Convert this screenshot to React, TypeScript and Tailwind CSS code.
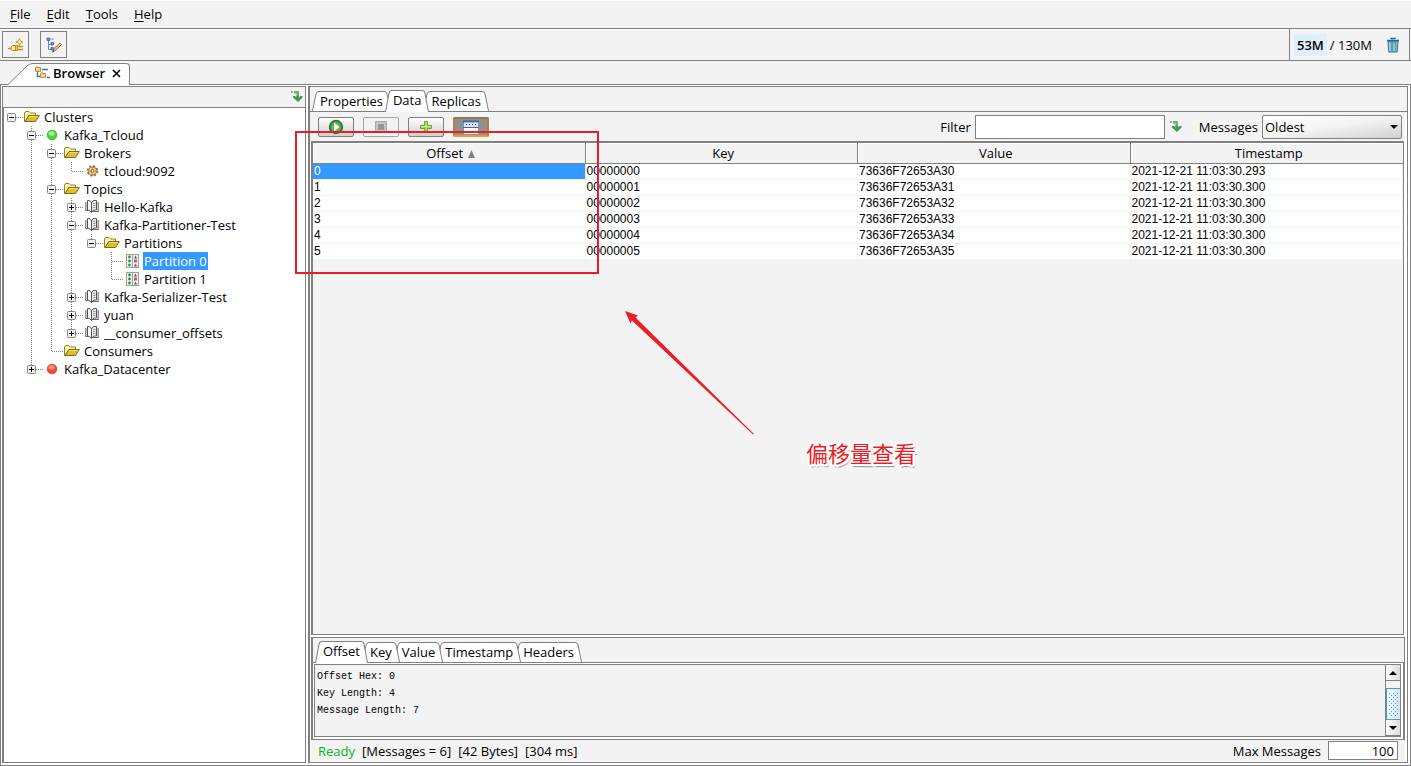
import { useState, type ReactNode } from "react";

type IconName = "folder" | "green" | "red" | "gear" | "book" | "partition";

type TreeRow = {
  label: string;
  icon: IconName;
  // one character per indent level: " " empty, "|" passing line, "T" branch, "L" last branch, "-" root
  guides: string;
  toggle?: "+" | "-";
};

const TREE: TreeRow[] = [
  { label: "Clusters", icon: "folder", guides: "-", toggle: "-" },
  { label: "Kafka_Tcloud", icon: "green", guides: " T", toggle: "-" },
  { label: "Brokers", icon: "folder", guides: " |T", toggle: "-" },
  { label: "tcloud:9092", icon: "gear", guides: " ||L" },
  { label: "Topics", icon: "folder", guides: " |T", toggle: "-" },
  { label: "Hello-Kafka", icon: "book", guides: " ||T", toggle: "+" },
  { label: "Kafka-Partitioner-Test", icon: "book", guides: " ||T", toggle: "-" },
  { label: "Partitions", icon: "folder", guides: " |||L", toggle: "-" },
  { label: "Partition 0", icon: "partition", guides: " ||| T" },
  { label: "Partition 1", icon: "partition", guides: " ||| L" },
  { label: "Kafka-Serializer-Test", icon: "book", guides: " ||T", toggle: "+" },
  { label: "yuan", icon: "book", guides: " ||T", toggle: "+" },
  { label: "__consumer_offsets", icon: "book", guides: " ||L", toggle: "+" },
  { label: "Consumers", icon: "folder", guides: " |L" },
  { label: "Kafka_Datacenter", icon: "red", guides: " L", toggle: "+" },
];

const MESSAGES = [
  ["0", "00000000", "73636F72653A30", "2021-12-21 11:03:30.293"],
  ["1", "00000001", "73636F72653A31", "2021-12-21 11:03:30.300"],
  ["2", "00000002", "73636F72653A32", "2021-12-21 11:03:30.300"],
  ["3", "00000003", "73636F72653A33", "2021-12-21 11:03:30.300"],
  ["4", "00000004", "73636F72653A34", "2021-12-21 11:03:30.300"],
  ["5", "00000005", "73636F72653A35", "2021-12-21 11:03:30.300"],
];

function FolderIcon() {
  return (
    <svg width="16" height="16" viewBox="0 0 16 16">
      <path d="M.5 12V4L1.500 2.500H5L6.500 4H11.500V7H5L1 13Z" fill="#fdf3ae" stroke="#93801f" />
      <path d="M1 12.500 4.800 6.500H15.300L11.500 12.500Z" fill="#dfbb36" stroke="#7f6b10" />
      <path d="M5.300 7.500h8.500" stroke="#f3dc78" />
    </svg>
  );
}

function DotIcon({ light, mid, dark }: { light: string; mid: string; dark: string }) {
  return (
    <svg width="16" height="16" viewBox="0 0 16 16">
      <circle cx="8" cy="8" r="4.800" fill={mid} stroke={dark} strokeWidth=".8" />
      <ellipse cx="7.500" cy="6.500" rx="3" ry="2.300" fill={light} />
    </svg>
  );
}

function GearIcon() {
  return (
    <svg width="16" height="16" viewBox="0 0 16 16">
      <circle cx="8.500" cy="8" r="4.800" fill="#f4c56c" stroke="#8a6240" strokeWidth="1.800" strokeDasharray="2 1.770" />
      <circle cx="8.500" cy="8" r="4" fill="#f9d487" stroke="#ab7642" strokeWidth=".8" />
      <circle cx="8.500" cy="8" r="1.500" fill="#fff" stroke="#7c5a3c" />
      <path d="M8.500 4v2M8.500 10v2M4.500 8h2M10.500 8h2" stroke="#c98e45" />
    </svg>
  );
}

function BookIcon() {
  return (
    <svg width="16" height="16" viewBox="0 0 16 16">
      <path d="M1.500 3V11.500H4M14.500 3V12.500H8" fill="none" stroke="#666" />
      <path d="M1.500 3h2v8h-2ZM13 3h1.500v9H13Z" fill="#c4c4c4" />
      <path d="M3.500 1.500H5Q7 2 7.500 4V13.500Q6.500 11.500 3.500 11Z" fill="#fafafa" stroke="#555" />
      <path d="M7.500 4Q8.500 1.500 10 1.500H12.500V11H10Q8.500 11.500 7.500 13.500Z" fill="#ececec" stroke="#555" />
      <path d="M9 4.500h2.500M9 6.500h2.500M9 8.500h2.500" stroke="#999" />
    </svg>
  );
}

function PartitionIcon() {
  return (
    <svg width="16" height="16" viewBox="0 0 16 16">
      <rect x="2.500" y="1.500" width="12" height="13" fill="#eef5fb" stroke="#aaa183" />
      <path d="M8.500 2v12" stroke="#aaa183" />
      <circle cx="5.500" cy="4" r="1.400" fill="#2c8b57" />
      <circle cx="5.500" cy="8" r="1.400" fill="#2c8b57" />
      <circle cx="5.500" cy="12" r="1.400" fill="#2c8b57" />
      <path d="m9.800 5.500 1.700-3 1.700 3Zm0 8 1.700-3 1.700 3Z" fill="#2a6db8" />
      <path d="M10 6.500h3v3h-3z" fill="#e0543e" />
    </svg>
  );
}

function NodeIcon({ name }: { name: IconName }) {
  switch (name) {
    case "folder":
      return <FolderIcon />;
    case "green":
      return <DotIcon light="#9bf58a" mid="#44d637" dark="#35ad2c" />;
    case "red":
      return <DotIcon light="#ff9a80" mid="#f5452b" dark="#dd3a22" />;
    case "gear":
      return <GearIcon />;
    case "book":
      return <BookIcon />;
    case "partition":
      return <PartitionIcon />;
  }
}

function DropArrowIcon() {
  return (
    <svg width="12" height="12" viewBox="0 0 12 12">
      <path d="M0 0h2v2H0z" fill="#7fc27d" />
      <path d="M3 0h5v7H5.500V2.500H3z" fill="#6ab573" />
      <path d="M2 5H4L5.500 6.500V4.500H8V6.500L9.500 5H11.500V6.500L7 11 2 6.500Z" fill="#3d9a56" />
    </svg>
  );
}

function Guide({ kind, toggle }: { kind: string; toggle?: "+" | "-" }) {
  const branch = kind === "T" || kind === "L" || kind === "-";
  return (
    <svg width="20" height="18" viewBox="0 0 20 18" className="shrink-0">
      {(kind === "|" || kind === "T") && <path d="M7.500 0V18" stroke="#808080" strokeDasharray="1 1" />}
      {kind === "L" && <path d="M7.500 0V10" stroke="#808080" strokeDasharray="1 1" />}
      {branch && <path d="M8 9.500H19" stroke="#808080" strokeDasharray="1 1" />}
      {toggle && (
        <>
          <rect x="3.500" y="5.500" width="8" height="8" rx="1" fill="#f1f1ee" stroke="#848484" />
          <path d={toggle === "+" ? "M5 9.500h5M7.500 7v5" : "M5 9.500h5"} stroke="#000" />
        </>
      )}
    </svg>
  );
}

function Tree() {
  const [selected, setSelected] = useState("Partition 0");
  return (
    <ul role="tree" aria-label="Clusters">
      {TREE.map((row) => (
        <li key={row.label} role="treeitem" aria-selected={row.label === selected} className="flex h-[18px] items-center">
          {row.guides.split("").map((kind, i) => (
            <Guide key={i} kind={kind} toggle={i === row.guides.length - 1 ? row.toggle : undefined} />
          ))}
          <NodeIcon name={row.icon} />
          <button
            type="button"
            onClick={() => setSelected(row.label)}
            className={`ml-[3px] h-[18px] px-px leading-[18px] whitespace-nowrap ${
              row.label === selected ? "bg-[#3399ff] text-white" : ""
            }`}
          >
            {row.label}
          </button>
        </li>
      ))}
    </ul>
  );
}

type TabStripProps = {
  label: string;
  tabs: string[];
  active: string;
  onSelect: (tab: string) => void;
};

function TabStrip({ label, tabs, active, onSelect }: TabStripProps) {
  return (
    <div role="tablist" aria-label={label} className="flex h-6 items-end border-b border-[#808080] pl-0.5">
      {tabs.map((tab, i) => {
        const on = tab === active;
        return (
          <button
            key={tab}
            type="button"
            role="tab"
            aria-selected={on}
            onClick={() => onSelect(tab)}
            className={`relative -mr-1.5 flex ${on ? "-mb-px h-[22px]" : "h-5"}`}
            style={{ zIndex: on ? 20 : 10 - i }}
          >
            <svg width="8" height="100%" viewBox="0 0 8 20" preserveAspectRatio="none" className="shrink-0">
              <path d="M.5 20 4 3Q4.500.5 7 .5H8V20Z" fill="#fff" />
              <path d="M.5 20 4 3Q4.500.5 7 .5H8" fill="none" stroke="#808080" />
            </svg>
            <span className="h-full border-t border-[#808080] bg-white leading-[19px]">{tab}</span>
            <svg width="8" height="100%" viewBox="0 0 8 20" preserveAspectRatio="none" className="shrink-0">
              <path d="M7.500 20 4 3Q3.500.5 1 .5H0V20Z" fill="#fff" />
              <path d="M7.500 20 4 3Q3.500.5 1 .5H0" fill="none" stroke="#808080" />
            </svg>
          </button>
        );
      })}
    </div>
  );
}

function ToolButton({ label, dim, pressed, children }: { label: string; dim?: boolean; pressed?: boolean; children: ReactNode }) {
  const look = pressed
    ? "border-2 border-[#a98245] border-t-[#8d7650] border-b-[#dfa02d] bg-[#909090]"
    : dim
      ? "border border-[#a5a5a5] bg-[#f3f3f3]"
      : "border border-[#808080] bg-linear-to-b from-white to-[#d0d0d0]";
  return (
    <button type="button" aria-label={label} className={`flex h-5 w-9 items-center justify-center rounded-xs ${look}`}>
      {children}
    </button>
  );
}

function MenuBar() {
  return (
    <nav className="flex h-[29px] items-center border-t border-b border-t-white border-b-[#808080] pb-0.5 pl-0.5">
      {["File", "Edit", "Tools", "Help"].map((item) => (
        <button key={item} type="button" className="px-2">
          <span className="underline underline-offset-2">{item[0]}</span>
          {item.slice(1)}
        </button>
      ))}
    </nav>
  );
}

function MainToolbar() {
  return (
    <div className="flex h-8 items-stretch border-b border-[#808080]">
      <div className="flex flex-1 items-start gap-[11px] border-t border-white pt-px pl-0.5">
        <button type="button" aria-label="Add cluster" className="flex size-[27px] items-center justify-center border border-[#808080]">
          <svg width="16" height="16" viewBox="0 0 16 16">
            <path d="M11.500 1.500 12.500 4 15 5 12.500 6 11.500 8.500 10.500 6 8 5 10.500 4Z" fill="#fff8d8" stroke="#c99a1c" />
            <path d="M0 11.500h3M9 9.500h6M9 12.500h6" stroke="#c0921a" strokeWidth="1.400" />
            <path d="M3 10 4.500 8.500h3v5h-3L3 12.500Z" fill="#fbeaa0" stroke="#b3861a" />
            <path d="M7.500 8.500H9.500v5h-2z" fill="#f0cc58" stroke="#b3861a" strokeWidth=".8" />
          </svg>
        </button>
        <button type="button" aria-label="Edit tree" className="flex size-[27px] items-center justify-center border border-[#808080]">
          <svg width="16" height="16" viewBox="0 0 16 16">
            <path d="M2.500 3v9.500H5M3 7.500h2" fill="none" stroke="#6a88c0" />
            <path d="M1 1h3v2.500H1zM5.500 2h2M5 5.500h2.500v2.500H5zM5 10.500h2.500v2.500H5z" fill="#6f91cd" stroke="#3d62a8" strokeWidth=".8" />
            <path d="m7 14 1-2.500 6-5.500L15.500 7.500 9.500 13.500Z" fill="#e1bd82" stroke="#8a6534" strokeWidth=".8" />
            <path d="m6 15.500 1-2.500 1.500 1.500Z" fill="#333" />
          </svg>
        </button>
      </div>
      <div className="mr-px flex items-center border-x border-[#808080] pr-[9px] pl-1">
        <span className="bg-[#dfeffe] px-[3px] leading-[22px] font-semibold">53M</span>
        <span className="ml-[3px]">/ 130M</span>
        <button type="button" aria-label="Collect garbage" className="ml-3.5">
          <svg width="14" height="16" viewBox="0 0 14 16">
            <path d="M2 4h10l-.8 11H2.800Z" fill="#8cc0cc" stroke="#2672a3" />
            <path d="M5 5v9M7 5v9M9 5v9" stroke="#33789b" />
            <path d="M4 6v8M8 6v8" stroke="#d2eae0" />
            <path d="M1 3.500h12M5 2V1.500h4V2" fill="none" stroke="#27699a" strokeWidth="1.600" />
          </svg>
        </button>
      </div>
    </div>
  );
}

function ViewTab() {
  return (
    <div className="flex h-6 items-end border-b border-[#808080] pl-2">
      <div className="-mb-px flex h-[22px]">
        <svg width="26" height="22" viewBox="0 0 26 22" className="shrink-0">
          <path d="M0 22 19 3Q21.500.5 25 .5H26V22Z" fill="#fff" />
          <path d="M0 21.500 19 3Q21.500.5 25 .5H26" fill="none" stroke="#808080" />
        </svg>
        <div className="flex items-center rounded-tr-sm border-t border-r border-[#808080] bg-white pr-2 pb-[3px]">
          <svg width="16" height="14" viewBox="0 0 16 14">
            <path d="M3.500 5v5.500H6M8 3.500h6M13 11.500h3" fill="none" stroke="#3573b5" strokeWidth="1.300" />
            <path d="M1.500 1.500 3 .7l1 .8h2.500v3.800h-5ZM6.500 7.500 8 6.700l1 .8h2.500v3.800h-5Z" fill="#f7d68c" stroke="#bb8739" />
          </svg>
          <h1 className="ml-[3px] font-semibold">Browser</h1>
          <button type="button" aria-label="Close Browser" className="ml-[7px]">
            <svg width="9" height="9" viewBox="0 0 9 9">
              <path d="m1 1 7 7M8 1 1 8" stroke="#000" strokeWidth="1.600" />
            </svg>
          </button>
        </div>
      </div>
    </div>
  );
}

function DataToolbar() {
  return (
    <div className="mr-0.5 flex h-[29px] items-center bg-[#f3f3f3] pr-[3px] pl-2">
      <div className="flex flex-1 gap-[9px]">
        <ToolButton label="Run">
          <svg width="16" height="16" viewBox="0 0 16 16">
            <circle cx="8" cy="8" r="6.300" fill="#5bb05a" stroke="#267a35" strokeWidth="1.800" />
            <path d="M6 3.500 11.500 8 6 12.500Z" fill="#fff" />
          </svg>
        </ToolButton>
        <ToolButton label="Stop" dim>
          <svg width="12" height="12" viewBox="0 0 12 12">
            <path d="M.5.5h11v11H.5z" fill="#c6c6c6" stroke="#a8a8a8" />
            <path d="M3 3h6v6H3z" fill="#969696" />
          </svg>
        </ToolButton>
        <ToolButton label="Add">
          <svg width="14" height="14" viewBox="0 0 14 14">
            <path d="M5.500 1.500h3v4h4v3h-4v4h-3v-4h-4v-3h4Z" fill="#a9d75c" stroke="#68a23b" />
            <path d="M7 2.500v4M2.500 6.500h9" stroke="#d5f08e" />
          </svg>
        </ToolButton>
        <ToolButton label="Toggle detail" pressed>
          <svg width="16" height="16" viewBox="0 0 16 16">
            <path d="M.5 2.500h15v13H.5z" fill="#fff" stroke="#8191b8" />
            <path d="M1 4h14v4H1z" fill="#dde4f4" />
            <path d="M0 2.500h16" stroke="#4266b0" strokeWidth="2" />
            <path d="M3 5.500h10" stroke="#444" strokeDasharray="1 2" />
            <path d="M0 8.500h16" stroke="#3f67b5" />
          </svg>
        </ToolButton>
      </div>
      <label htmlFor="filter">Filter</label>
      <input id="filter" type="text" className="ml-1 h-6 w-[190px] border border-[#808080] bg-white px-1 outline-none" />
      <button type="button" aria-label="Apply filter" className="ml-[5px]">
        <DropArrowIcon />
      </button>
      <label htmlFor="messages" className="ml-[17px]">
        Messages
      </label>
      <div className="relative ml-1">
        <select
          id="messages"
          className="h-6 w-[140px] appearance-none rounded-xs border border-[#808080] bg-linear-to-br from-white via-[#f3f3f3] to-[#d0d0d0] pl-0.5 outline-none"
        >
          <option>Oldest</option>
          <option>Newest</option>
        </select>
        <svg width="8" height="4" viewBox="0 0 8 4" className="pointer-events-none absolute top-2.5 right-1">
          <path d="M0 0h8L4 4Z" />
        </svg>
      </div>
    </div>
  );
}

function MessageTable() {
  return (
    <div className="mr-[3px] ml-px flex-1 border border-t-2 border-l-2 border-[#808080] bg-[#f3f3f3]">
      <table className="w-full table-fixed border-separate border-spacing-0 text-left">
        <thead>
          <tr>
            {["Offset", "Key", "Value", "Timestamp"].map((name) => (
              <th
                key={name}
                className="h-[21px] border-r border-b border-[#808080] p-0 pl-1 text-center leading-5 font-normal shadow-[inset_1px_1px_0_#fff] last:border-r-0"
              >
                {name}
                {name === "Offset" && (
                  <svg width="7" height="8" viewBox="0 0 7 8" className="ml-[5px] inline-block align-baseline">
                    <path d="M3.500 0 7 8H0Z" fill="#808080" />
                  </svg>
                )}
              </th>
            ))}
          </tr>
        </thead>
        <tbody className="font-['Liberation_Sans',Arial,sans-serif] text-xs">
          {MESSAGES.map((row, r) => (
            <tr key={row[0]}>
              {row.map((cell, c) => (
                <td
                  key={c}
                  className={`h-4 border-r border-b border-[#f3f3f3] p-0 pl-px leading-[15px] ${
                    r === 0 && c === 0 ? "bg-[#3399ff] text-white" : "bg-white"
                  }`}
                >
                  {cell}
                </td>
              ))}
            </tr>
          ))}
        </tbody>
      </table>
    </div>
  );
}

function DetailScrollbar() {
  return (
    <div className="flex w-[15px] flex-col border-l border-[#808080]">
      <button type="button" aria-label="Scroll up" className="flex h-4 items-center justify-center border-b border-[#808080] bg-linear-to-r from-white to-[#dcdcdc]">
        <svg width="8" height="4" viewBox="0 0 8 4">
          <path d="M0 4h8L4 0Z" />
        </svg>
      </button>
      <div className="flex flex-1 flex-col pt-[7px]">
        <div className="flex flex-1 items-center justify-center border border-r-0 border-[#3399ff] bg-linear-to-r from-white to-[#cfe6fd]">
          <svg width="9" height="23" viewBox="0 0 9 23">
            <defs>
              <pattern id="grip" width="4" height="4" patternUnits="userSpaceOnUse">
                <path d="M0 0h1v1H0zM2 2h1v1H2z" fill="#3399ff" />
              </pattern>
            </defs>
            <rect width="9" height="23" fill="url(#grip)" />
          </svg>
        </div>
      </div>
      <button type="button" aria-label="Scroll down" className="flex h-4 items-center justify-center border-b border-[#808080] bg-linear-to-r from-white to-[#dcdcdc]">
        <svg width="8" height="4" viewBox="0 0 8 4">
          <path d="M0 0h8L4 4Z" />
        </svg>
      </button>
    </div>
  );
}

function DetailPane() {
  const [tab, setTab] = useState("Offset");
  return (
    <section className="mt-0.5 mr-0.5 ml-px border border-l-2 border-[#808080] bg-[#f3f3f3] pt-px">
      <TabStrip label="Message detail" tabs={["Offset", "Key", "Value", "Timestamp", "Headers"]} active={tab} onSelect={setTab} />
      <div className="border-r border-[#808080] bg-white pt-px pr-0.5 pb-0.5 pl-px">
        <div className="flex h-[73px] border border-[#808080] bg-[#f3f3f3]">
          <pre className="flex-1 pt-[3px] pl-0.5 font-['Liberation_Mono','Courier_New',monospace] text-[10px] leading-[17px]">
            {"Offset Hex: 0\nKey Length: 4\nMessage Length: 7"}
          </pre>
          <DetailScrollbar />
        </div>
      </div>
    </section>
  );
}

function StatusBar() {
  return (
    <footer className="mr-0.5 mb-px ml-px flex h-[21px] items-center gap-[7px] bg-[#f3f3f3] pr-[7px] pl-[7px]">
      <span className="text-[#00b626]">Ready</span>
      <span>[Messages = 6]</span>
      <span>[42 Bytes]</span>
      <span className="flex-1">[304 ms]</span>
      <label htmlFor="max-messages">Max Messages</label>
      <input
        id="max-messages"
        type="text"
        defaultValue="100"
        className="h-[19px] w-[70px] border border-[#808080] bg-white pr-[3px] text-right outline-none"
      />
    </footer>
  );
}

// Hand-drawn marks that float over the window
function Annotations() {
  return (
    <div className="pointer-events-none absolute top-0 left-0 z-50 text-[#ed1c24]">
      <div className="absolute top-[131px] left-[295px] h-[143px] w-[304px] border-2 border-[#ed1c24]" />
      <svg width="130" height="125" viewBox="0 0 130 125" className="absolute top-[310px] left-[625px]">
        <path d="M0 1 13 5.500 10.500 7.500 129 124 128 124.500 7 10.500 5.500 13.500Z" fill="#ed1c24" />
      </svg>
      <p className="absolute top-[436px] left-[806px] font-['Noto_Sans_CJK_SC',sans-serif] text-[22px] leading-8 whitespace-nowrap [text-shadow:-2px_0_#fff,2px_0_#fff,0_-2px_#fff,0_2px_#fff,2px_2px_#fff,-2px_-2px_#fff,2px_-2px_#fff,-2px_2px_#fff,2px_3px_1px_#888]">
        偏移量查看
      </p>
    </div>
  );
}

export default function App() {
  const [tab, setTab] = useState("Data");
  return (
    <div className="relative flex min-h-screen flex-col bg-[#f3f3f3] font-['Open_Sans','Noto_Sans',sans-serif] text-[13px] leading-4 text-black">
      <MenuBar />
      <MainToolbar />
      <ViewTab />
      <main className="flex flex-1 border-x border-b border-[#808080] bg-white pt-px pr-0.5 pb-0.5 pl-px">
        <aside className="flex w-[304px] flex-col border border-[#808080]">
          <div className="flex h-5 items-center justify-end bg-[#f3f3f3] pr-0.5">
            <button type="button" aria-label="Locate in tree">
              <DropArrowIcon />
            </button>
          </div>
          <div className="flex-1 border-t border-l border-[#808080] bg-white">
            <Tree />
          </div>
        </aside>
        <section className="ml-0.5 flex min-w-0 flex-1 flex-col border border-l-2 border-[#808080] bg-white">
          <div className="bg-[#f3f3f3] pt-px">
            <TabStrip label="Partition" tabs={["Properties", "Data", "Replicas"]} active={tab} onSelect={setTab} />
          </div>
          <DataToolbar />
          <MessageTable />
          <DetailPane />
          <StatusBar />
        </section>
      </main>
      <Annotations />
    </div>
  );
}
